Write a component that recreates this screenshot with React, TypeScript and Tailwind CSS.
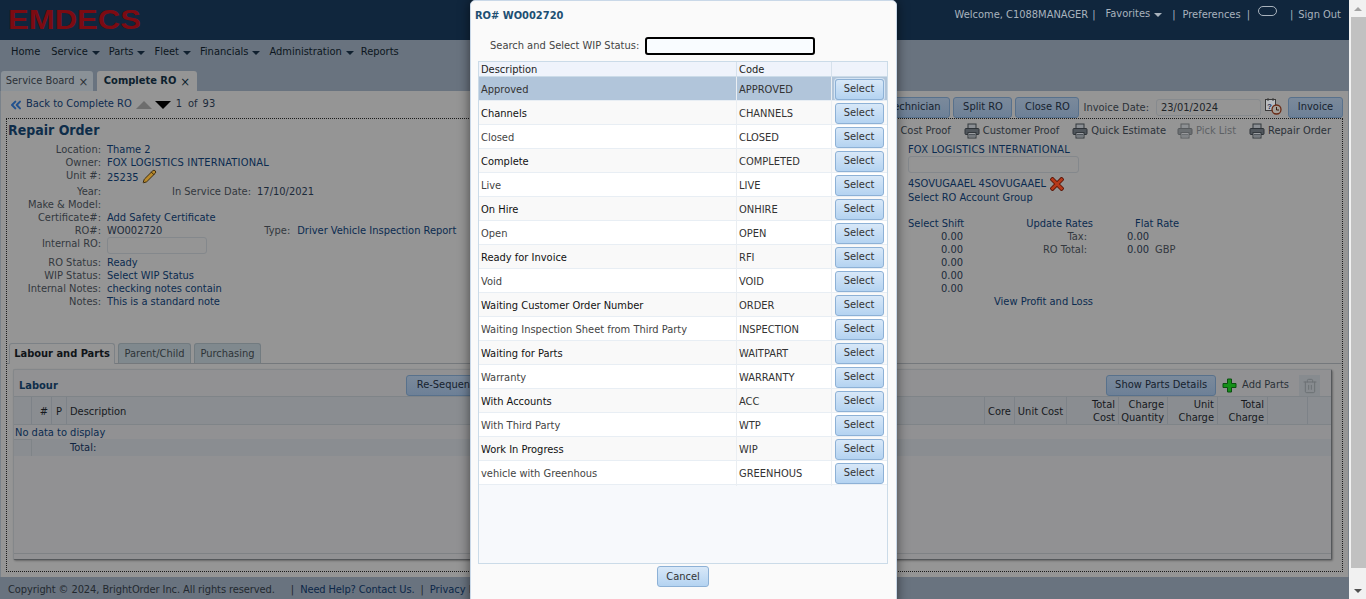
import { ChevronsLeft, Pencil, Trash2 } from 'lucide-react';
import type { ReactNode } from 'react';

const navItems = [
  { label: 'Home', menu: false, gap: 'mr-[11px]' },
  { label: 'Service', menu: true, gap: 'mr-[9px]' },
  { label: 'Parts', menu: true, gap: 'mr-[9px]' },
  { label: 'Fleet', menu: true, gap: 'mr-[9px]' },
  { label: 'Financials', menu: true, gap: 'mr-[9px]' },
  { label: 'Administration', menu: true, gap: 'mr-[7px]' },
  { label: 'Reports', menu: false, gap: '' },
];

const wipStatuses = [
  ['Approved', 'APPROVED'],
  ['Channels', 'CHANNELS'],
  ['Closed', 'CLOSED'],
  ['Complete', 'COMPLETED'],
  ['Live', 'LIVE'],
  ['On Hire', 'ONHIRE'],
  ['Open', 'OPEN'],
  ['Ready for Invoice', 'RFI'],
  ['Void', 'VOID'],
  ['Waiting Customer Order Number', 'ORDER'],
  ['Waiting Inspection Sheet from Third Party', 'INSPECTION'],
  ['Waiting for Parts', 'WAITPART'],
  ['Warranty', 'WARRANTY'],
  ['With Accounts', 'ACC'],
  ['With Third Party', 'WTP'],
  ['Work In Progress', 'WIP'],
  ['vehicle with Greenhous', 'GREENHOUS'],
];

const fontClass = "font-['DejaVu_Sans_Condensed','DejaVu_Sans',sans-serif]";

function Caret() {
  return <span className="ml-[4px] inline-block h-0 w-0 translate-y-[1px] border-x-[4px] border-t-[4px] border-x-transparent border-t-[#10202f]" />;
}

function ToolButton({ children, className = '' }: { children: ReactNode; className?: string }) {
  return (
    <div className={`flex h-[21px] items-center justify-center rounded-[3px] border border-[#58718c] bg-gradient-to-b from-[#7b8a9b] to-[#6d8097] text-[#16222e] ${className}`}>
      {children}
    </div>
  );
}

function Printer({ dim = false }: { dim?: boolean }) {
  return (
    <svg width="16" height="16" viewBox="0 0 16 16" className={dim ? 'opacity-60' : ''}>
      <rect x="4" y="1" width="8" height="5" fill="#8b8f94" stroke="#33383d" />
      <rect x="1" y="5.5" width="14" height="6" rx="1" fill="#50565c" stroke="#2e3338" />
      <rect x="4" y="9.5" width="8" height="5.5" fill="#9a9da1" stroke="#33383d" />
      <path d="M5 11.5h6M5 13h6" stroke="#50565c" />
    </svg>
  );
}

function PrintLink({ label, dim = false, className = '' }: { label: string; dim?: boolean; className?: string }) {
  return (
    <div className={`flex items-center gap-[3px] ${dim ? 'text-[#5d6165]' : 'text-[#2b3138]'} ${className}`}>
      <Printer dim={dim} />
      <span>{label}</span>
    </div>
  );
}

function Row({ label, children, className = 'h-[13px]' }: { label: string; children?: ReactNode; className?: string }) {
  return (
    <div className={`flex leading-[13px] ${className}`}>
      <div className="w-[94px] shrink-0 text-right text-[#33383e]">{label}</div>
      <div className="ml-[6px] flex min-w-0 flex-1 text-[#0b2b50]">{children}</div>
    </div>
  );
}

function TableHead({ children, className = '' }: { children?: ReactNode; className?: string }) {
  return <div className={`flex items-center whitespace-nowrap border-r border-[#7d8288] px-[3px] leading-[13px] text-[#16191d] ${className}`}>{children}</div>;
}

function WipStatusDialog() {
  return (
    <div className="absolute bottom-[-8px] left-[470px] top-0 flex w-[427px] flex-col rounded-t-[5px] border border-[#c9d8e8] bg-[#fafafa] shadow-[0_0_12px_rgba(0,0,0,0.55)]">
      <div className="ml-[4px] mt-[8px] h-[14px] text-[11px] font-bold leading-[14px] text-[#1d4f73]">RO# WO002720</div>
      <div className="ml-[19px] mt-[14px] flex h-[18px] items-center text-[#444]">
        <span>Search and Select WIP Status:</span>
        <div className="ml-[6px] h-[18px] w-[170px] rounded-[3px] border-2 border-black bg-[#f9fcff]" />
      </div>
      <div className="ml-[7px] mt-[6px] h-[503px] w-[410px] border border-[#cbdbe8] bg-[#f7f9fc]">
        <div className="grid h-[15px] grid-cols-[258px_95px_1fr] border-b border-[#cbdbe8] bg-[#eff3fb] leading-[15px] text-[#222]">
          <div className="border-r border-[#d6e1ec] pl-[2px]">Description</div>
          <div className="border-r border-[#d6e1ec] pl-[2px]">Code</div>
          <div />
        </div>
        {wipStatuses.map(([description, code], i) => (
          <div
            key={code}
            className={`grid h-[24px] grid-cols-[258px_95px_1fr] border-b leading-[25px] ${
              i === 0
                ? 'border-[#e8eef4] bg-[#b1c5da] text-[#333]'
                : i % 2 === 1
                  ? 'border-[#e8eef4] bg-[#f9f9f9] text-[#111]'
                  : 'border-[#e8eef4] bg-white text-[#444]'
            }`}
          >
            <div className="border-r border-[#eaeef2] pl-[2px]">{description}</div>
            <div className="border-r border-[#eaeef2] pl-[2px] text-[#333]">{code}</div>
            <div className="flex items-center justify-center pb-[1px] pr-[1px]">
              <div className={`flex h-[21px] w-[49px] items-center justify-center rounded-[3px] border border-[#8db1d6] bg-gradient-to-b from-[#d8e8f8] to-[#b4d3f1] pb-[1px] leading-none text-[#333] ${i === 0 ? 'ring-1 ring-[#d4e4f4]' : ''}`}>
                Select
              </div>
            </div>
          </div>
        ))}
      </div>
      <div className="mt-[2px] flex h-[21px] w-[426px] justify-center pr-[2px]">
        <div className="flex h-[21px] w-[52px] items-center justify-center rounded-[3px] border border-[#8db1d6] bg-gradient-to-b from-[#d8e8f8] to-[#b4d3f1] pb-[1px] leading-none text-[#333]">
          Cancel
        </div>
      </div>
    </div>
  );
}

export default function App() {
  return (
    <div className={`relative flex h-[599px] w-[1366px] overflow-hidden text-[11px] ${fontClass}`}>
      <div className="flex w-[1349px] shrink-0 flex-col bg-[#69737f]">
        {/* Header */}
        <header className="flex h-[40px] items-start justify-between bg-[#10263d]">
          <svg width="140" height="34" viewBox="0 0 140 34" className="ml-[8px] mt-[3px]">
            <text x="0" y="26" textLength="133" lengthAdjust="spacingAndGlyphs" fill="#7c0b12" fontSize="28" fontWeight="700" fontFamily="Liberation Sans, sans-serif">
              EMDECS
            </text>
          </svg>
          <div className="mr-[8px] mt-[8px] flex h-[14px] items-center whitespace-nowrap leading-[14px] text-[#a9b3bd]">
            <span>Welcome, C1088MANAGER</span>
            <span className="ml-[4px]">|</span>
            <span className="ml-[10px] mb-[2px]">Favorites</span>
            <span className="ml-[4px] mb-[2px] h-0 w-0 translate-y-[1px] border-x-[4px] border-t-[4px] border-x-transparent border-t-[#a9b3bd]" />
            <span className="ml-[10px]">|</span>
            <span className="ml-[7px]">Preferences</span>
            <span className="ml-[6px]">|</span>
            <span className="ml-[8px] mb-[8px] h-[10px] w-[19px] rounded-[5px] border border-[#a9b3bd]" />
            <span className="ml-[13px]">|</span>
            <span className="ml-[5px]">Sign Out</span>
          </div>
        </header>

        {/* Main nav */}
        <nav className="flex h-[24px] items-center pl-[11px] text-[#0c1620]">
          {navItems.map((item) => (
            <div key={item.label} className={`flex items-center whitespace-nowrap ${item.gap}`}>
              {item.label}
              {item.menu && <Caret />}
            </div>
          ))}
        </nav>

        {/* Page tabs */}
        <div className="mt-[7px] flex h-[20px] items-end pl-[1px]">
          <div className="flex h-[20px] w-[92px] items-center justify-center rounded-t-[3px] bg-[#8a9197] pt-[1px] text-[#2c3237]">
            Service Board <span className="ml-[4px] text-[13px] leading-none">×</span>
          </div>
          <div className="ml-[4px] flex h-[20px] w-[100px] items-center justify-center rounded-t-[3px] bg-[#959595] pt-[1px] font-bold text-[#0d1f2e]">
            Complete RO <span className="ml-[4px] text-[13px] font-normal leading-none">×</span>
          </div>
        </div>

        {/* Content */}
        <main className="flex h-[486px] flex-col border-x border-[#7a828a] bg-[#959595]">
          {/* Toolbar */}
          <div className="flex h-[27px] items-center justify-between pr-[5px]">
            <div className="flex items-center pl-[7px]">
              <ChevronsLeft size={16} strokeWidth={3} className="text-[#22528f]" />
              <span className="ml-[2px] text-[#0d2b50]">Back to Complete RO</span>
              <span className="ml-[4px] h-0 w-0 border-x-[8px] border-b-[8px] border-x-transparent border-b-[#6d6d6d]" />
              <span className="ml-[3px] h-0 w-0 border-x-[8px] border-t-[8px] border-x-transparent border-t-black" />
              <span className="ml-[5px] text-[#1c2a3a]">1</span>
              <span className="ml-[6px] text-[#1c2a3a]">of</span>
              <span className="ml-[5px] text-[#1c2a3a]">93</span>
            </div>
            <div className="flex items-center pt-[6px]">
              <ToolButton className="w-[62px] justify-end pr-[9px]">
                <span className="whitespace-nowrap">Technician</span>
              </ToolButton>
              <ToolButton className="ml-[3px] w-[59px]">Split RO</ToolButton>
              <ToolButton className="ml-[3px] w-[64px]">Close RO</ToolButton>
              <span className="ml-[4px] pt-[1px] text-[#2b3138]">Invoice Date:</span>
              <div className="ml-[7px] h-[17px] w-[105px] rounded-[3px] border border-[#868a8e] bg-[#959595] pl-[4px] leading-[16px] text-[#202428]">23/01/2024</div>
              <svg width="18" height="18" viewBox="0 0 18 18" className="ml-[3px] mb-[4px]">
                <rect x="1.5" y="2.5" width="10" height="11" fill="#b9bcc0" stroke="#3a3a3a" />
                <path d="M4 1v3M9 1v3" stroke="#3a3a3a" />
                <text x="3" y="12" fontSize="8" fill="#1c2f55" fontFamily="Liberation Sans, sans-serif" fontWeight="700">?</text>
                <circle cx="12.5" cy="12.5" r="4.5" fill="#a4a09a" stroke="#6a2a14" strokeWidth="1.3" />
                <path d="M12.5 10v3h2.5" stroke="#3a1e10" fill="none" />
              </svg>
              <ToolButton className="ml-[6px] w-[55px]">Invoice</ToolButton>
            </div>
          </div>

          {/* Repair order form */}
          <section className="ml-[5px] flex h-[454px] w-[1337px] flex-col border border-dotted border-[#1a1a1a]">
            <div className="flex h-[24px] items-center justify-between pr-[11px]">
              <h1 className="mb-[2px] ml-[1px] text-[14px] font-bold leading-none text-[#0e2d4a]">Repair Order</h1>
              <div className="flex items-center">
                <span className="text-[#2b3138]">Cost Proof</span>
                <PrintLink label="Customer Proof" className="ml-[13px]" />
                <PrintLink label="Quick Estimate" className="ml-[13px]" />
                <PrintLink label="Pick List" dim className="ml-[11px]" />
                <PrintLink label="Repair Order" className="ml-[13px]" />
              </div>
            </div>

            <div className="flex h-[165px]">
              <div className="w-[901px] shrink-0">
                <Row label="Location:">Thame 2</Row>
                <Row label="Owner:"><span className="tracking-[0.18px]">FOX LOGISTICS INTERNATIONAL</span></Row>
                <Row label="Unit #:" className="h-[16px]">
                  <span className="mt-[2px]">25235</span>
                  <Pencil size={15} fill="#b98a2c" strokeWidth={1.6} className="ml-[4px] text-[#3c2c10]" />
                </Row>
                <Row label="Year:">
                  <span className="ml-[65px] text-[#33383e]">In Service Date:</span>
                  <span className="ml-[6px] text-[#1c2a3a]">17/10/2021</span>
                </Row>
                <Row label="Make &amp; Model:" />
                <Row label="Certificate#:">Add Safety Certificate</Row>
                <Row label="RO#:">
                  <span className="text-[#1c2a3a]">WO002720</span>
                  <span className="ml-[102px] text-[#33383e]">Type:</span>
                  <span className="ml-[7px]">Driver Vehicle Inspection Report</span>
                </Row>
                <Row label="Internal RO:" className="h-[19px]">
                  <div className="h-[17px] w-[100px] rounded-[3px] border border-[#84888c]" />
                </Row>
                <Row label="RO Status:">Ready</Row>
                <Row label="WIP Status:">Select WIP Status</Row>
                <Row label="Internal Notes:">checking notes contain</Row>
                <Row label="Notes:">This is a standard note</Row>
              </div>

              <div className="leading-[13px] text-[#0b2b50]">
                <div className="h-[13px] tracking-[0.18px]">FOX LOGISTICS INTERNATIONAL</div>
                <div className="h-[17px] w-[171px] rounded-[3px] border border-[#84888c]" />
                <div className="mt-[4px] flex h-[13px] items-center">
                  4SOVUGAAEL 4SOVUGAAEL
                  <svg width="14" height="14" viewBox="0 0 14 14" className="ml-[4px]">
                    <path d="M2.5 2.5l9 9M11.500 2.5l-9 9" stroke="#5c1608" strokeWidth="4.4" strokeLinecap="square" />
                    <path d="M2.5 2.5l9 9M11.500 2.5l-9 9" stroke="#b6391a" strokeWidth="2.6" strokeLinecap="square" />
                  </svg>
                </div>
                <div className="mt-[1px] h-[13px]">Select RO Account Group</div>
                <div className="mt-[13px] grid grid-cols-[55px_130px_42px_auto] grid-rows-[repeat(7,13px)] whitespace-nowrap">
                  <div className="text-right">Select Shift</div>
                  <div className="text-right">Update Rates</div>
                  <div />
                  <div className="text-[#0b2b50]">Flat Rate</div>

                  <div className="text-right text-[#1c2a3a]">0.00</div>
                  <div className="pr-[6px] text-right text-[#33383e]">Tax:</div>
                  <div className="col-span-2 pl-[34px] text-[#1c2a3a]">0.00</div>

                  <div className="text-right text-[#1c2a3a]">0.00</div>
                  <div className="pr-[6px] text-right text-[#33383e]">RO Total:</div>
                  <div className="col-span-2 pl-[34px] text-[#1c2a3a]">
                    0.00<span className="ml-[6px] text-[#33383e]">GBP</span>
                  </div>

                  <div className="col-span-4 w-[55px] text-right text-[#1c2a3a]">0.00</div>
                  <div className="col-span-4 w-[55px] text-right text-[#1c2a3a]">0.00</div>
                  <div className="col-span-4 w-[55px] text-right text-[#1c2a3a]">0.00</div>

                  <div />
                  <div className="text-right">View Profit and Loss</div>
                </div>
              </div>
            </div>

            {/* Lower tabs */}
            <div className="mt-[35px] flex h-[21px] items-end border-b border-[#74787c] pl-[2px]">
              <div className="mb-[-1px] flex h-[21px] w-[106px] items-center justify-center whitespace-nowrap rounded-t-[3px] border border-b-0 border-[#7c8186] bg-[#959595] pt-[1px] font-bold text-[#101418]">
                Labour and Parts
              </div>
              <div className="ml-[3px] flex h-[20px] w-[73px] items-center justify-center rounded-t-[3px] border border-b-0 border-[#727b80] bg-[#80898e] pt-[1px] text-[#2e3438]">
                Parent/Child
              </div>
              <div className="ml-[3px] flex h-[20px] w-[67px] items-center justify-center rounded-t-[3px] border border-b-0 border-[#727b80] bg-[#80898e] pt-[1px] text-[#2e3438]">
                Purchasing
              </div>
            </div>

            {/* Labour panel */}
            <div className="ml-[6px] mt-[5px] flex h-[191px] w-[1319px] flex-col rounded-[2px] border border-[#84878a] border-b-[#55585b] border-r-[#55585b] bg-[#919193] shadow-[1px_1px_2px_rgba(0,0,0,0.3)]">
              <div className="flex h-[26px] items-end justify-between pr-[11px]">
                <div className="flex items-end">
                  <h2 className="mb-[2px] ml-[5px] font-bold text-[#0e2d4a]">Labour</h2>
                  <ToolButton className="ml-[348px] w-[90px] justify-start pl-[10px]">
                    <span className="whitespace-nowrap">Re-Sequence</span>
                  </ToolButton>
                </div>
                <div className="flex items-center">
                  <ToolButton className="w-[110px]">Show Parts Details</ToolButton>
                  <svg width="15" height="15" viewBox="0 0 15 15" className="ml-[6px]">
                    <path d="M5.5 1h4v4.5H14v4H9.5V14h-4V9.500H1v-4h4.500z" fill="#159019" stroke="#0b4f10" />
                  </svg>
                  <span className="ml-[5px] text-[#2b3138]">Add Parts</span>
                  <div className="ml-[10px] flex h-[21px] w-[21px] items-center justify-center bg-[#878b8f]">
                    <Trash2 size={16} strokeWidth={1.5} className="text-[#6c7175]" />
                  </div>
                </div>
              </div>

              <div className="grid h-[29px] grid-cols-[18px_20px_15px_918px_30px_52px_52px_49px_50px_50px_40px_1fr] border-y border-[#7f8488] bg-[#8a8d91]">
                <TableHead />
                <TableHead className="justify-end pt-[1px]">#</TableHead>
                <TableHead className="justify-center px-0 pt-[1px]">P</TableHead>
                <TableHead className="pt-[1px]">Description</TableHead>
                <TableHead className="justify-center px-0 pt-[1px]">Core</TableHead>
                <TableHead className="justify-center px-0 pt-[1px]">Unit Cost</TableHead>
                <TableHead className="justify-end text-right">Total<br />Cost</TableHead>
                <TableHead className="justify-end px-[2px] text-right">Charge<br />Quantity</TableHead>
                <TableHead className="justify-end text-right">Unit<br />Charge</TableHead>
                <TableHead className="justify-end text-right">Total<br />Charge</TableHead>
                <TableHead />
                <TableHead className="border-r-0" />
              </div>
              <div className="h-[14px] pl-[1px] leading-[15px] text-[#0b2b50]">No data to display</div>
              <div className="flex h-[17px] bg-[#8a8d91] leading-[17px]">
                <div className="h-[17px] w-[18px] border-r border-t border-[#7f8488]" />
                <div className="ml-[35px] pl-[3px] text-[#0e2340]">Total:</div>
              </div>
              <div className="mt-auto h-[6px] border-t border-[#7f8285]" />
            </div>
          </section>
        </main>

        {/* Footer */}
        <footer className="flex flex-1 items-center whitespace-nowrap pl-[8px] pt-[4px] text-[#23292f]">
          <span className="tracking-[-0.09px]">Copyright © 2024, BrightOrder Inc. All rights reserved.</span>
          <span className="ml-[16px]">|</span>
          <span className="ml-[6px] tracking-[-0.13px] text-[#0c2748]">Need Help? Contact Us.</span>
          <span className="ml-[6px]">|</span>
          <span className="ml-[6px] text-[#0c2748]">Privacy Policy</span>
        </footer>
      </div>

      {/* Window scrollbar */}
      <div className="flex w-[17px] flex-col items-center bg-[#f1f1f1]">
        <div className="flex h-[17px] w-full items-center justify-center">
          <span className="h-0 w-0 border-x-[4px] border-b-[4px] border-x-transparent border-b-[#a3a3a3]" />
        </div>
        <div className="ml-[2px] h-[551px] w-[15px] bg-[#c1c1c1]" />
        <div className="mt-auto flex h-[17px] w-full items-center justify-center">
          <span className="h-0 w-0 border-x-[4px] border-t-[4px] border-x-transparent border-t-[#505050]" />
        </div>
      </div>

      <WipStatusDialog />
    </div>
  );
}
